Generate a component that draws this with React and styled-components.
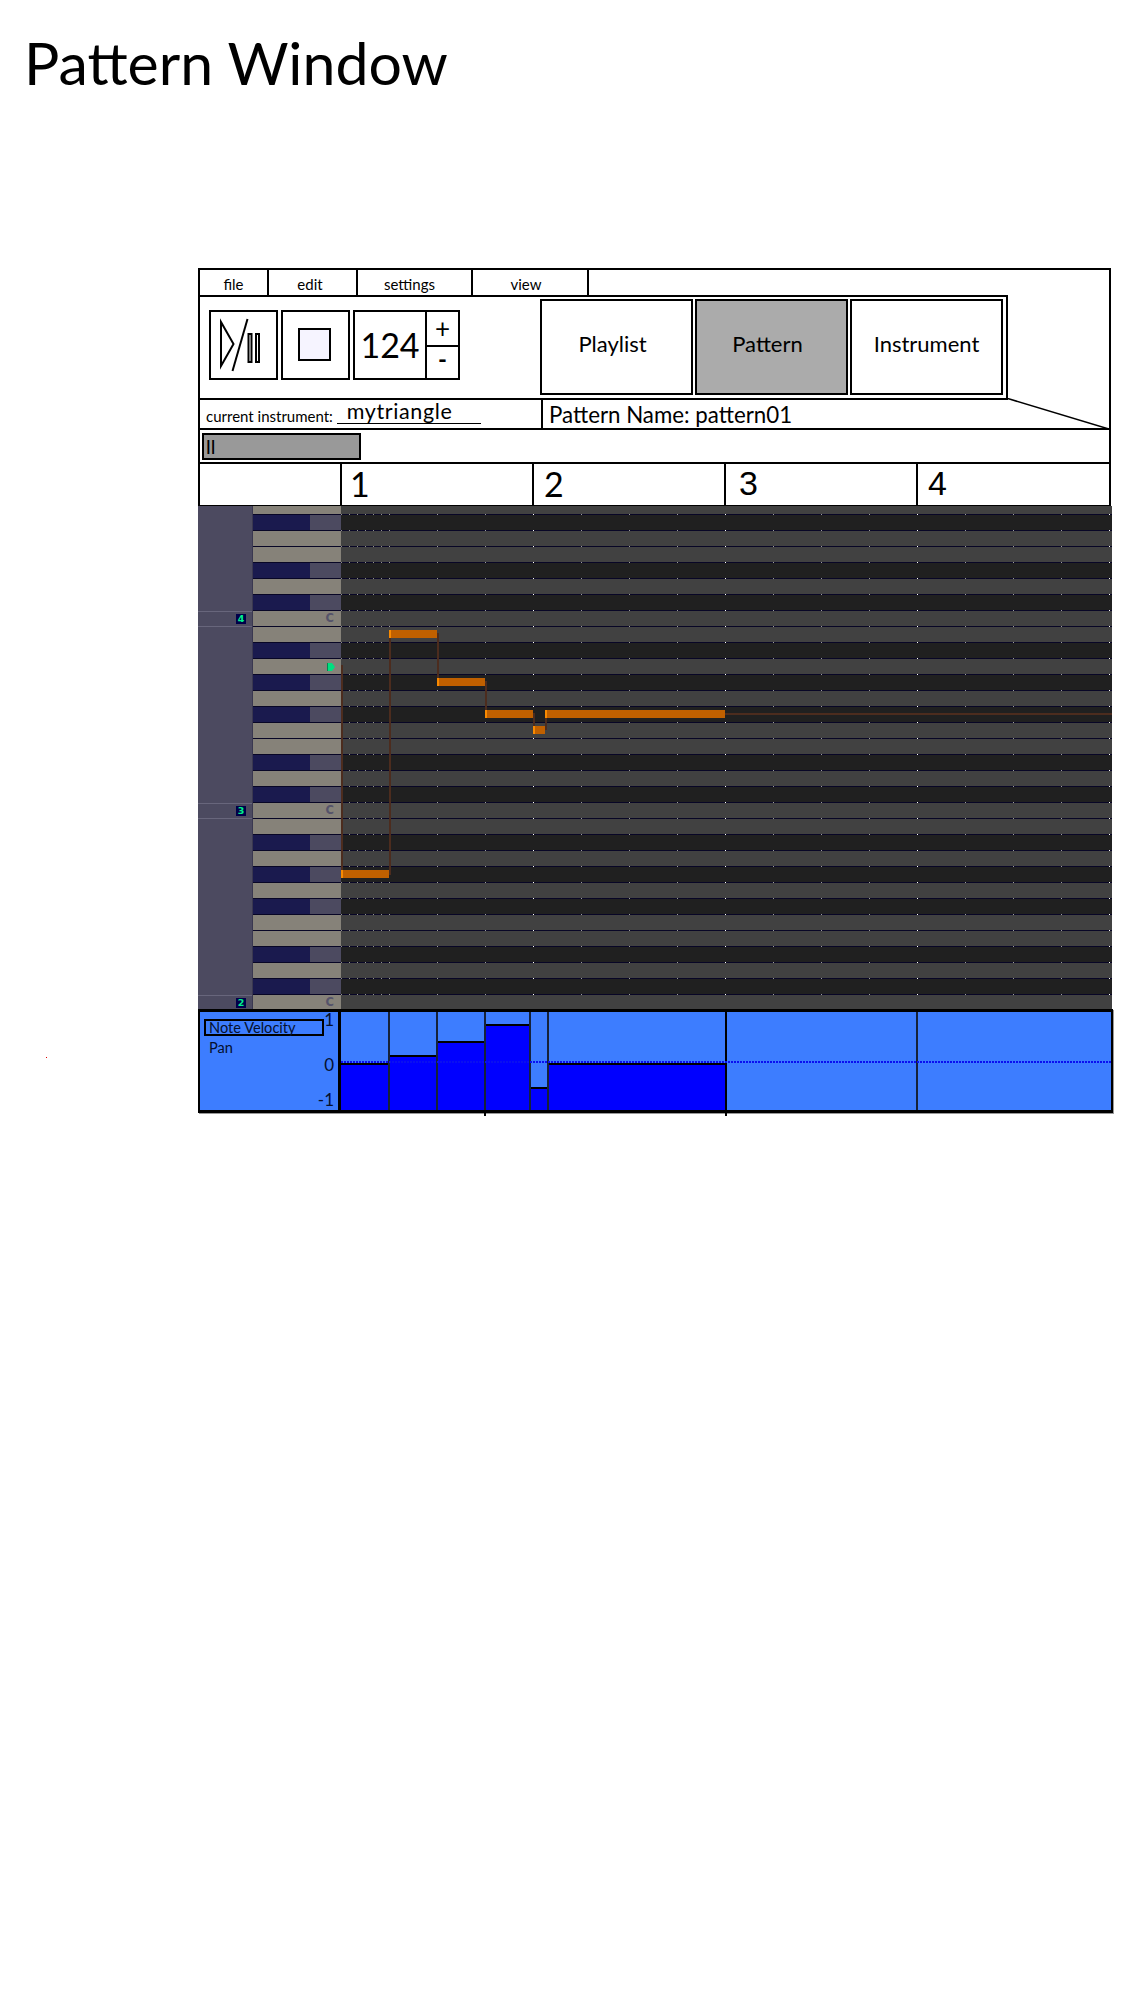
import React from "react";
import styled, { createGlobalStyle } from "styled-components";

const Global = createGlobalStyle`
  html, body { margin: 0; padding: 0; background: #fff; }
  body { font-family: "Lato", "Open Sans", sans-serif; color: #000; }
`;

const FONT = `"Lato", "Open Sans", sans-serif`;
const ROW = 16;
const BAR = 192;

const Page = styled.div`
  width: 1138px;
  height: 2000px;
  position: relative;
  overflow: hidden;
  background: #fff;
`;
const Title = styled.h1`
  margin: 0;
  padding: 28px 0 0 24px;
  height: 268px;
  box-sizing: border-box;
  font: 400 59px/70px ${FONT};
`;
const Window = styled.div`
  margin-left: 198px;
  width: 916px;
`;
const Frame = styled.div`
  box-sizing: border-box;
  width: 913px;
  border: 2px solid #000;
  border-bottom: 0;
  display: flex;
  flex-direction: column;
  position: relative;
`;
const MenuBar = styled.div`
  display: flex;
  height: 25px;
`;
const MenuItem = styled.div`
  box-sizing: border-box;
  width: ${(p) => p.$w}px;
  height: 25px;
  border-right: 2px solid #000;
  display: flex;
  align-items: center;
  justify-content: center;
  padding: 2px ${(p) => p.$shift || 0}px 0 0;
  font-size: 15px;
`;
const ToolRow = styled.div`
  display: flex;
  height: 105px;
  width: 808px;
  box-sizing: border-box;
  border-top: 2px solid #000;
  border-bottom: 2px solid #000;
  border-right: 2px solid #000;
`;
const Transport = styled.div`
  display: flex;
  gap: 3px;
  padding: 13px 0 0 9px;
  width: 337px;
  box-sizing: border-box;
`;
const ToolBox = styled.div`
  box-sizing: border-box;
  width: ${(p) => p.$w}px;
  height: 70px;
  border: 2px solid #000;
  display: flex;
  align-items: center;
  justify-content: center;
`;
const Tempo = styled(ToolBox)`
  justify-content: flex-start;
  align-items: stretch;
`;
const TempoValue = styled.div`
  width: 72px;
  font-size: 34px;
  display: flex;
  align-items: center;
  justify-content: center;
  padding-bottom: 2px;
  box-sizing: border-box;
  border-right: 2px solid #000;
`;
const Stepper = styled.div`
  flex: 1;
  display: flex;
  flex-direction: column;
`;
const StepPlus = styled.div`
  box-sizing: border-box;
  height: 33px;
  padding-bottom: 2px;
  display: flex;
  align-items: center;
  justify-content: center;
  font-size: 26px;
  line-height: 16px;
`;
const StepMinus = styled.div`
  box-sizing: border-box;
  height: 33px;
  border-top: 2px solid #000;
  padding-bottom: 8px;
  display: flex;
  align-items: center;
  justify-content: center;
  font-size: 24px;
  line-height: 16px;
  font-weight: 700;
`;
const Tabs = styled.div`
  display: flex;
  gap: 2px;
  padding: 2px 0 0 3px;
`;
const Tab = styled.div`
  box-sizing: border-box;
  width: ${(p) => p.$w}px;
  height: 96px;
  border: 2px solid #000;
  background: ${(p) => (p.$active ? "#ababab" : "#fff")};
  display: flex;
  align-items: center;
  justify-content: center;
  font-size: 22px;
  padding: 0 ${(p) => p.$shift || 0}px 7px 0;
`;
const InfoRow = styled.div`
  display: flex;
  height: 30px;
  box-sizing: border-box;
  border-bottom: 2px solid #000;
`;
const InfoLeft = styled.div`
  box-sizing: border-box;
  width: 343px;
  border-right: 2px solid #000;
  display: flex;
  align-items: flex-end;
  padding: 0 0 3px 6px;
  font-size: 15px;
`;
const InstrumentName = styled.span`
  box-sizing: border-box;
  width: 144px;
  margin-left: 4px;
  border-bottom: 1px solid #000;
  font-size: 21.5px;
  line-height: 24px;
  padding-left: 10px;
  letter-spacing: 0.6px;
  margin-bottom: 1px;
`;
const InfoRight = styled.div`
  padding: 2px 0 0 6px;
  font-size: 22.3px;
  line-height: 26px;
`;
const ScrollRow = styled.div`
  height: 34px;
  box-sizing: border-box;
  border-bottom: 2px solid #000;
  padding: 3px 0 0 2px;
`;
const ScrollThumb = styled.div`
  box-sizing: border-box;
  width: 159px;
  height: 27px;
  background: #999;
  border: 2px solid #000;
  font-size: 20px;
  line-height: 23px;
  padding-left: 2px;
`;
const Ruler = styled.div`
  box-sizing: border-box;
  width: 913px;
  height: 43px;
  border: 2px solid #000;
  border-top: 0;
  display: flex;
`;
const RulerSpacer = styled.div`
  box-sizing: border-box;
  width: 142px;
  border-right: 2px solid #000;
`;
const RulerBar = styled.div`
  box-sizing: border-box;
  width: ${BAR}px;
  border-right: ${(p) => (p.$last ? 0 : "2px solid #000")};
  padding: 0 0 0 ${(p) => p.$pad}px;
  font: 400 34px/39px ${(p) => (p.$alt ? `"Liberation Sans", sans-serif` : FONT)};
  flex: ${(p) => (p.$last ? 1 : "none")};
`;
const Roll = styled.div`
  position: relative;
  width: 914px;
  height: 504px;
  margin-top: -1px;
  display: flex;
  flex-direction: column;
  overflow: hidden;
`;
const Row = styled.div`
  display: flex;
  flex: none;
  height: ${(p) => p.$h}px;
`;
const Octave = styled.div`
  box-sizing: border-box;
  width: 55px;
  background: #4c4a60;
  border-right: 1px solid #3a3850;
  display: flex;
  align-items: center;
  justify-content: flex-end;
  padding-right: 6px;
  ${(p) => p.$label && "box-shadow: inset 0 1px 0 #68667c, inset 0 -1px 0 #68667c;"}
`;
const OctaveTag = styled.span`
  width: 10px;
  height: 10px;
  background: #00004a;
  color: #00f08c;
  font: 700 9.5px/10px "DejaVu Sans", sans-serif;
  text-align: center;
`;
const Key = styled.div`
  box-sizing: border-box;
  width: 88px;
  display: flex;
  position: relative;
  background: ${(p) => (p.$black ? "#4c4a60" : "#868279")};
  border-bottom: 1px solid #080626;
`;
const BlackPart = styled.div`
  width: 57px;
  background: #1a1a4e;
`;
const KeyLabel = styled.span`
  position: absolute;
  right: 7px;
  top: 1px;
  color: #55536a;
  font: 700 11.5px/13px "DejaVu Sans", sans-serif;
`;
const Marker = styled.svg`
  position: absolute;
  right: 6px;
  top: 4px;
  width: 8px;
  height: 8px;
`;
const Lane = styled.div`
  flex: 1;
  position: relative;
  background-color: ${(p) => (p.$black ? "#202020" : "#414141")};
  border-bottom: 1px solid #080626;
`;
const Ticks = styled.div`
  position: absolute;
  left: 0;
  right: 0;
  bottom: -1px;
  height: 1px;
  background:
    repeating-linear-gradient(90deg, #fff 0 1px, transparent 1px 192px),
    repeating-linear-gradient(90deg, #9a9aa0 0 1px, transparent 1px 48px);
`;
const SubTicks = styled.div`
  position: absolute;
  left: 0;
  width: 48px;
  bottom: -1px;
  height: 1px;
  background: repeating-linear-gradient(90deg, #909090 0 1px, transparent 1px 8px);
`;
const Note = styled.div`
  position: absolute;
  left: ${(p) => p.$x}px;
  top: ${(p) => p.$y}px;
  width: ${(p) => p.$w}px;
  height: 8px;
  background: linear-gradient(90deg, #f98a00 0 2px, #c06000 2px);
`;
const Link = styled.div`
  position: absolute;
  left: ${(p) => p.$x}px;
  top: ${(p) => p.$y}px;
  width: ${(p) => p.$w || 2}px;
  height: ${(p) => p.$h}px;
  background: #4c2c1e;
`;
const Velocity = styled.div`
  position: relative;
  box-sizing: border-box;
  width: 915px;
  height: 104px;
  margin-top: -1px;
  border: 2px solid #000;
  border-top-width: 3px;
  border-bottom-width: 3px;
  background: #3d7dff;
  display: flex;
  box-shadow: 1px 1px 0 #999;
`;
const VelLabels = styled.div`
  box-sizing: border-box;
  width: 141px;
  border-right: 3px solid #000;
  position: relative;
  padding: 7px 0 0 4px;
  font-size: 14.6px;
  color: #05102e;
`;
const VelOption = styled.div`
  box-sizing: border-box;
  width: 120px;
  height: 17px;
  border: ${(p) => (p.$on ? "2px solid #000" : "0")};
  padding-left: ${(p) => (p.$on ? "3px" : "5px")};
  margin-bottom: 3px;
  line-height: ${(p) => (p.$on ? "14px" : "17px")};
`;
const Scale = styled.span`
  position: absolute;
  right: 4px;
  top: ${(p) => p.$y}px;
  font-size: 17px;
  line-height: 17px;
`;
const VelBars = styled.div`
  flex: 1;
  display: flex;
  position: relative;
`;
const VelCell = styled.div`
  box-sizing: border-box;
  flex: ${(p) => (p.$w ? `0 0 ${p.$w}px` : 1)};
  border-right: ${(p) => (p.$last ? 0 : `2px solid ${p.$strong ? "#000" : "#16223a"}`)};
  display: flex;
  flex-direction: column;
  justify-content: flex-end;
`;
const VelFill = styled.div`
  background: #0000ff;
  border-top: 2px solid #000;
`;
const ZeroLine = styled.div`
  position: absolute;
  left: 0;
  right: 0;
  top: 49px;
  height: 2px;
  background: repeating-linear-gradient(90deg, #0a10f0 0 2px, transparent 2px 3px);
`;
const Stub = styled.div`
  position: absolute;
  left: ${(p) => p.$x}px;
  bottom: -6px;
  width: 2px;
  height: 6px;
  background: #000;
`;
const Speck = styled.div`
  position: absolute;
  left: 46px;
  top: 1057px;
  width: 1px;
  height: 1px;
  background: #e00000;
`;
const Tilt = styled.svg`
  position: absolute;
  left: 806px;
  top: 128px;
  width: 103px;
  height: 31px;
`;
const PlayIcon = styled.svg`
  margin-right: 3px;
`;
const StopIcon = styled.svg`
  margin: 0 2px 2px 0;
`;

const PITCH = ["C", "B", "A#", "A", "G#", "G", "F#", "F", "E", "D#", "D", "C#"];
const BLACK = new Set(["A#", "G#", "F#", "D#", "C#"]);

function buildRows() {
  const rows = [];
  // topmost row is half hidden by the ruler: G of octave 4, running down to C of octave 2
  for (let i = 0; i < 32; i++) {
    const n = 5 + i;
    rows.push({ name: PITCH[n % 12], octave: 5 - Math.floor(n / 12), first: i === 0 });
  }
  return rows;
}

const NOTES = [
  { x: 143, y: 364, w: 48 },
  { x: 191, y: 124, w: 48 },
  { x: 239, y: 172, w: 48 },
  { x: 287, y: 204, w: 48 },
  { x: 335, y: 220, w: 12 },
  { x: 347, y: 204, w: 180 },
];
const LINKS = [
  { x: 143, y: 159, h: 205 },
  { x: 191, y: 132, h: 237 },
  { x: 239, y: 127, h: 45 },
  { x: 287, y: 175, h: 29 },
  { x: 335, y: 207, h: 13 },
  { x: 347, y: 212, h: 12 },
  { x: 527, y: 207, h: 2, w: 387 },
];
const BARS = [
  { w: 49, h: 45 },
  { w: 48, h: 53 },
  { w: 48, h: 67 },
  { w: 45, h: 84 },
  { w: 18, h: 21 },
  { w: 178, h: 45, strong: true },
  { w: 191 },
  { w: 0 },
];

export default function App() {
  const rows = buildRows();
  return (
    <Page>
      <Global />
      <Title>Pattern Window</Title>
      <Window>
        <Frame>
          <MenuBar>
            <MenuItem $w={69}>file</MenuItem>
            <MenuItem $w={89} $shift={5}>edit</MenuItem>
            <MenuItem $w={115} $shift={10}>settings</MenuItem>
            <MenuItem $w={116} $shift={8}>view</MenuItem>
          </MenuBar>
          <ToolRow>
            <Transport>
              <ToolBox $w={69}>
                <PlayIcon width="44" height="54" viewBox="0 0 44 54" fill="none" stroke="#000">
                  <path d="M1 4 L13.5 26 L1 48 Z" strokeWidth="2" />
                  <path d="M27.5 1 L12.5 53" strokeWidth="2" />
                  <rect x="28.5" y="16" width="3" height="28" strokeWidth="2" />
                  <rect x="36" y="16" width="3" height="28" strokeWidth="2" />
                </PlayIcon>
              </ToolBox>
              <ToolBox $w={69}>
                <StopIcon width="33" height="33" viewBox="0 0 33 33">
                  <rect x="1" y="1" width="31" height="31" fill="#f6f4ff" stroke="#000" strokeWidth="2" />
                </StopIcon>
              </ToolBox>
              <Tempo $w={107}>
                <TempoValue>124</TempoValue>
                <Stepper>
                  <StepPlus>+</StepPlus>
                  <StepMinus>-</StepMinus>
                </Stepper>
              </Tempo>
            </Transport>
            <Tabs>
              <Tab $w={153} $shift={8}>Playlist</Tab>
              <Tab $w={153} $shift={8} $active>Pattern</Tab>
              <Tab $w={153}>Instrument</Tab>
            </Tabs>
          </ToolRow>
          <Tilt viewBox="0 0 103 31">
            <path d="M0 0 L103 31" stroke="#000" strokeWidth="1.6" />
          </Tilt>
          <InfoRow>
            <InfoLeft>
              current instrument:
              <InstrumentName>mytriangle</InstrumentName>
            </InfoLeft>
            <InfoRight>Pattern Name: pattern01</InfoRight>
          </InfoRow>
          <ScrollRow>
            <ScrollThumb>ll</ScrollThumb>
          </ScrollRow>
        </Frame>
        <Ruler>
          <RulerSpacer />
          <RulerBar $pad={8}>1</RulerBar>
          <RulerBar $pad={10}>2</RulerBar>
          <RulerBar $pad={13} $alt>3</RulerBar>
          <RulerBar $pad={10} $alt $last>4</RulerBar>
        </Ruler>
        <Roll>
          {rows.map((r, i) => {
            const black = BLACK.has(r.name);
            return (
              <Row key={i} $h={r.first ? 9 : ROW}>
                <Octave $label={r.name === "C"}>
                  {r.name === "C" && <OctaveTag>{r.octave}</OctaveTag>}
                </Octave>
                <Key $black={black}>
                  {black && <BlackPart />}
                  {r.name === "C" && <KeyLabel>C</KeyLabel>}
                  {i === 10 && (
                    <Marker viewBox="0 0 8 8">
                      <path d="M0 0 H5 L8 4 L5 8 H0 Z" fill="#00e080" />
                      <rect width="1" height="8" fill="#008a50" />
                    </Marker>
                  )}
                </Key>
                <Lane $black={black}>
                  <Ticks />
                  <SubTicks />
                </Lane>
              </Row>
            );
          })}
          {LINKS.map((l, i) => (
            <Link key={i} $x={l.x} $y={l.y} $h={l.h} $w={l.w} />
          ))}
          {NOTES.map((n, i) => (
            <Note key={i} $x={n.x} $y={n.y} $w={n.w} />
          ))}
        </Roll>
        <Velocity>
          <VelLabels>
            <VelOption $on>Note Velocity</VelOption>
            <VelOption>Pan</VelOption>
            <Scale $y={-1}>1</Scale>
            <Scale $y={44}>0</Scale>
            <Scale $y={79}>-1</Scale>
          </VelLabels>
          <VelBars>
            {BARS.map((b, i) => (
              <VelCell key={i} $w={b.w} $strong={b.strong} $last={i === BARS.length - 1}>
                {b.h ? <VelFill style={{ height: b.h }} /> : null}
              </VelCell>
            ))}
            <ZeroLine />
          </VelBars>
          <Stub $x={284} />
          <Stub $x={525} />
        </Velocity>
      </Window>
      <Speck />
    </Page>
  );
}
